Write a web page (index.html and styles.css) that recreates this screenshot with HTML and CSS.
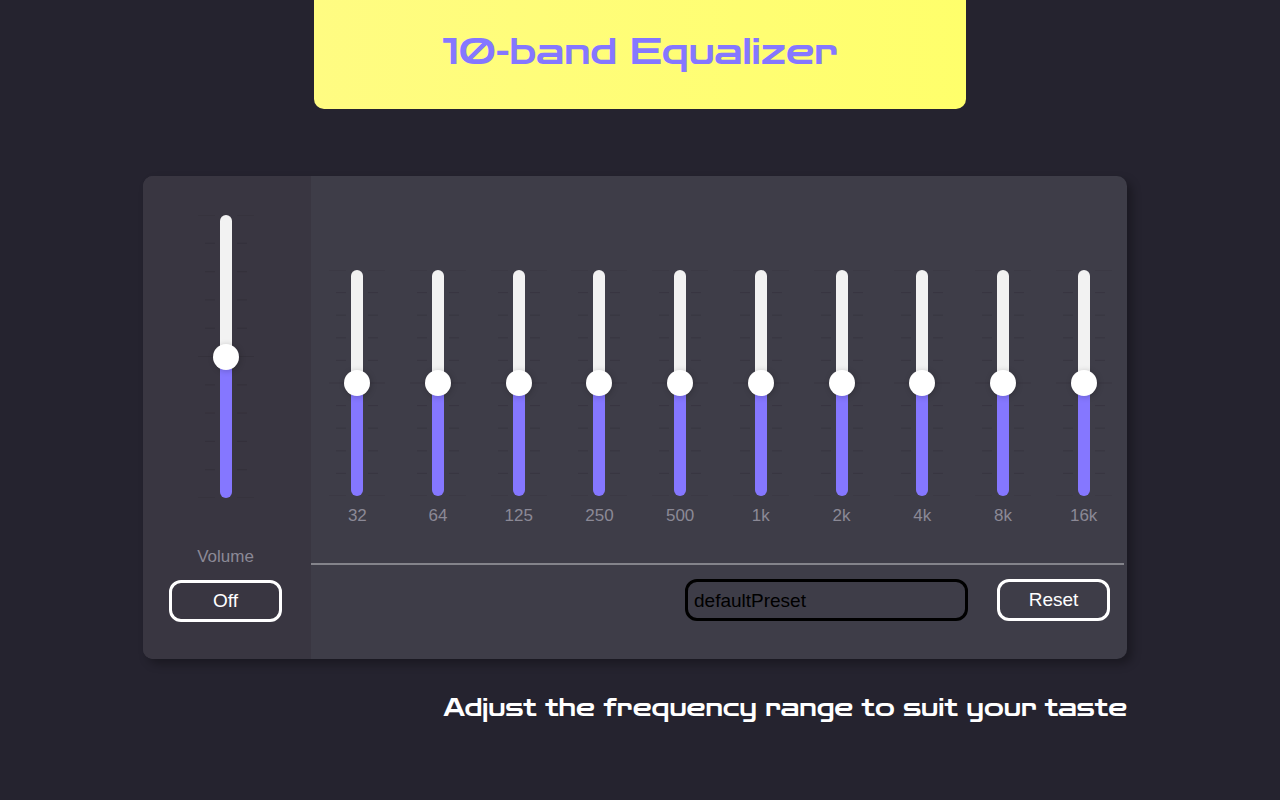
FILE: index.html
```html
<!DOCTYPE html>
<html lang="en">
<head>
  <meta charset="UTF-8" />
  <meta name="viewport" content="width=device-width, initial-scale=1.0"/>
  <title>10-band Equalizer</title>
  <link rel="stylesheet" href="styles.css">
</head>
<body>
  <!-- Tick marks shared by all sliders -->
  <svg class="defs" aria-hidden="true">
    <symbol id="ticks" viewBox="0 0 56 100" preserveAspectRatio="none">
      <path vector-effect="non-scaling-stroke" d="M0 0H17M39 0H56M0 50H17M39 50H56M0 100H17M39 100H56"/>
      <path vector-effect="non-scaling-stroke" d="M7 10H17M39 10H49M7 20H17M39 20H49M7 30H17M39 30H49M7 40H17M39 40H49M7 60H17M39 60H49M7 70H17M39 70H49M7 80H17M39 80H49M7 90H17M39 90H49"/>
    </symbol>
  </svg>

  <header class="header">
    <h1>10-band Equalizer</h1>
  </header>

  <main>
    <div class="equalizer">
      <!-- Volume -->
      <section class="volume">
        <div class="slider slider-volume">
          <svg class="ticks"><use href="#ticks"/></svg>
          <input type="range" id="volume" min="0" max="100" value="50">
        </div>
        <label for="volume">Volume</label>
        <button type="button" class="btn" id="powerBtn">Off</button>
      </section>

      <section class="panel">
        <!-- Frequency bands -->
        <div class="bands">
          <div class="band">
            <div class="slider"><svg class="ticks"><use href="#ticks"/></svg><input type="range" id="b32" min="-12" max="12" value="0"></div>
            <label for="b32">32</label>
          </div>
          <div class="band">
            <div class="slider"><svg class="ticks"><use href="#ticks"/></svg><input type="range" id="b64" min="-12" max="12" value="0"></div>
            <label for="b64">64</label>
          </div>
          <div class="band">
            <div class="slider"><svg class="ticks"><use href="#ticks"/></svg><input type="range" id="b125" min="-12" max="12" value="0"></div>
            <label for="b125">125</label>
          </div>
          <div class="band">
            <div class="slider"><svg class="ticks"><use href="#ticks"/></svg><input type="range" id="b250" min="-12" max="12" value="0"></div>
            <label for="b250">250</label>
          </div>
          <div class="band">
            <div class="slider"><svg class="ticks"><use href="#ticks"/></svg><input type="range" id="b500" min="-12" max="12" value="0"></div>
            <label for="b500">500</label>
          </div>
          <div class="band">
            <div class="slider"><svg class="ticks"><use href="#ticks"/></svg><input type="range" id="b1k" min="-12" max="12" value="0"></div>
            <label for="b1k">1k</label>
          </div>
          <div class="band">
            <div class="slider"><svg class="ticks"><use href="#ticks"/></svg><input type="range" id="b2k" min="-12" max="12" value="0"></div>
            <label for="b2k">2k</label>
          </div>
          <div class="band">
            <div class="slider"><svg class="ticks"><use href="#ticks"/></svg><input type="range" id="b4k" min="-12" max="12" value="0"></div>
            <label for="b4k">4k</label>
          </div>
          <div class="band">
            <div class="slider"><svg class="ticks"><use href="#ticks"/></svg><input type="range" id="b8k" min="-12" max="12" value="0"></div>
            <label for="b8k">8k</label>
          </div>
          <div class="band">
            <div class="slider"><svg class="ticks"><use href="#ticks"/></svg><input type="range" id="b16k" min="-12" max="12" value="0"></div>
            <label for="b16k">16k</label>
          </div>
        </div>

        <!-- Preset controls -->
        <div class="controls">
          <select id="preset" aria-label="Preset">
            <option>defaultPreset</option>
          </select>
          <button type="button" class="btn" id="resetBtn">Reset</button>
        </div>
      </section>
    </div>

    <p class="tagline">Adjust the frequency range to suit your taste</p>
  </main>

  <script>
    const bands = document.querySelectorAll('.band input');
    const powerBtn = document.getElementById('powerBtn');

    // Colour the track up to the thumb
    function paint(input) {
      const part = (input.value - input.min) / (input.max - input.min);
      input.style.setProperty('--fill', part * 100 + '%');
    }

    document.querySelectorAll('input[type="range"]').forEach(input => {
      input.addEventListener('input', () => paint(input));
      paint(input);
    });

    document.getElementById('resetBtn').addEventListener('click', () => {
      bands.forEach(input => {
        input.value = 0;
        paint(input);
      });
    });

    powerBtn.addEventListener('click', () => {
      powerBtn.textContent = powerBtn.textContent === 'Off' ? 'On' : 'Off';
    });
  </script>
</body>
</html>
```
FILE: styles.css
```css
* {
  box-sizing: border-box;
  margin: 0;
  padding: 0;
}
body {
  background-color: #25232f;
  font-family: "Liberation Sans", Arial, sans-serif;
  color: #ffffff;
  min-height: 100vh;
}
.defs {
  display: none;
}
/*
  Header
*/
.header {
  width: 51%;
  margin: 0 auto;
  padding: 31px 16px 34px;
  border-radius: 0 0 10px 10px;
  background: linear-gradient(90deg, #fffc82, #ffff6b);
  text-align: center;
}
h1 {
  font-family: "Zen Dots", "DejaVu Sans", sans-serif;
  font-size: 36px;
  font-weight: normal;
  line-height: 44px;
  color: #8577ff;
}
/*
  Equalizer box
*/
main {
  max-width: 994px;
  margin: 67px auto 0;
  padding-right: 10px;
}
.equalizer {
  display: flex;
  border-radius: 10px;
  overflow: hidden;
  background-color: #3e3d48;
  box-shadow: 5px 5px 10px rgba(0, 0, 0, 0.3);
}
label {
  font-size: 17px;
  line-height: 20px;
  color: #8b8996;
}
.volume {
  flex: none;
  display: flex;
  flex-direction: column;
  align-items: center;
  width: 168px;
  padding: 39px 3px 37px 0;
  background-color: #393641;
}
.volume label {
  margin: 49px 0 13px;
}
.panel {
  flex: 1;
  padding-top: 94px;
}
.bands {
  display: grid;
  grid-template-columns: repeat(10, 1fr);
  margin-right: 3px;
  padding: 0 0 37px 6px;
  border-bottom: 2px solid #84848b;
}
.band {
  display: flex;
  flex-direction: column;
  align-items: center;
  gap: 10px;
}
/*
  Sliders
*/
.slider {
  display: grid;
  justify-items: center;
  width: 56px;
  height: 226px;
}
.slider-volume {
  height: 283px;
}
.ticks,
.slider input {
  grid-area: 1 / 1;
  height: 100%;
}
.ticks {
  width: 56px;
  overflow: visible;
  fill: none;
  stroke: #383641;
  stroke-width: 1px;
}
.slider-volume .ticks {
  stroke: #34313b;
}
.slider input {
  appearance: none;
  writing-mode: vertical-lr;
  direction: rtl;
  width: 26px;
  background: none;
  cursor: pointer;
}
.slider input::-webkit-slider-runnable-track {
  width: 12px;
  border-radius: 6px;
  background: linear-gradient(to top, #8577ff var(--fill, 50%), #f2f2f2 var(--fill, 50%));
}
.slider input::-webkit-slider-thumb {
  appearance: none;
  width: 26px;
  height: 26px;
  margin-left: -7px;
  border-radius: 50%;
  background-color: #ffffff;
  box-shadow: 1px 1px 6px rgba(0, 0, 0, 0.2);
}
/*
  Controls
*/
.controls {
  display: flex;
  justify-content: flex-end;
  gap: 29px;
  padding: 14px 17px 38px;
}
.btn,
select {
  height: 42px;
  border: 3px solid #ffffff;
  border-radius: 12px;
  background: none;
  font-family: inherit;
  font-size: 19px;
  color: #ffffff;
  cursor: pointer;
}
.btn {
  width: 113px;
}
select {
  appearance: none;
  width: 283px;
  padding: 0 6px;
  border-color: #000000;
  color: #000000;
}
.tagline {
  margin-top: 33px;
  font-family: "Zen Dots", "DejaVu Sans", sans-serif;
  font-size: 24px;
  line-height: 32px;
  text-align: right;
}
```
